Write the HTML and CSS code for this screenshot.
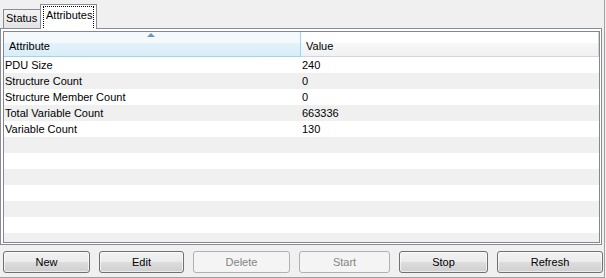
FILE: index.html
```html
<!DOCTYPE html>
<html>
<head>
<meta charset="utf-8">
<link rel="stylesheet" href="styles.css">
</head>
<body>
<div class="frame">
  <div class="tabs">
    <div class="tab">Status</div>
    <div class="tab active"><span class="focus">Attributes</span></div>
  </div>
  <div class="panel">
    <div class="grid">
      <div class="head">
        <div class="hcell sorted">Attribute<span class="arrow"></span></div>
        <div class="hcell">Value</div>
      </div>
      <div class="body">
        <div class="row"><div class="c1">PDU Size</div><div class="c2">240</div></div>
        <div class="row alt"><div class="c1">Structure Count</div><div class="c2">0</div></div>
        <div class="row"><div class="c1">Structure Member Count</div><div class="c2">0</div></div>
        <div class="row alt"><div class="c1">Total Variable Count</div><div class="c2">663336</div></div>
        <div class="row"><div class="c1">Variable Count</div><div class="c2">130</div></div>
        <div class="row alt"></div>
        <div class="row"></div>
        <div class="row alt"></div>
        <div class="row"></div>
        <div class="row alt"></div>
        <div class="row"></div>
        <div class="row alt"></div>
      </div>
    </div>
  </div>
  <div class="buttons">
    <button class="btn">New</button>
    <button class="btn">Edit</button>
    <button class="btn" disabled>Delete</button>
    <button class="btn" disabled>Start</button>
    <button class="btn">Stop</button>
    <button class="btn">Refresh</button>
  </div>
</div>
</body>
</html>
```
FILE: styles.css
```css
html, body {
  margin: 0;
  padding: 0;
  background: #f0f0f0;
}
body {
  font-family: "Liberation Sans", Arial, sans-serif;
  font-size: 11px;
  color: #000;
}
.frame {
  width: 604px;
  height: 277px;
  border-right: 1px solid #a0a0a0;
  border-bottom: 1px solid #a0a0a0;
  display: flex;
  flex-direction: column;
  overflow: hidden;
}
.tabs {
  height: 28px;
  display: flex;
  align-items: flex-end;
  padding-left: 3px;
}
.tab {
  box-sizing: border-box;
  height: 19px;
  width: 37px;
  border: 1px solid #898c95;
  border-bottom: none;
  border-right: none;
  background: linear-gradient(#f3f3f3, #e3e3e3);
  padding: 1px 0 0 2px;
  line-height: 14px;
}
.tab.active {
  height: 25px;
  width: 57px;
  background: #fff;
  border-right: 1px solid #898c95;
  padding: 1px 0 0 2px;
  margin-bottom: -1px;
  position: relative;
  z-index: 1;
}
.focus {
  display: block;
  border: 1px dotted #000;
  border-bottom: none;
  height: 22px;
  width: 51px;
  box-sizing: border-box;
  padding: 1px 0 0 2px;
  line-height: 14px;
}
.panel {
  box-sizing: border-box;
  width: 602px;
  height: 217px;
  border: 1px solid #898c95;
  background: #fff;
  padding: 2px 1px 1px 2px;
}
.grid {
  box-sizing: border-box;
  height: 212px;
  border: 1px solid #828790;
  display: flex;
  flex-direction: column;
  overflow: hidden;
}
.head {
  display: grid;
  grid-template-columns: 297px 1fr;
  height: 25px;
  flex: none;
}
.hcell {
  box-sizing: border-box;
  height: 25px;
  padding: 8px 0 0 5px;
  line-height: 13px;
  background: linear-gradient(#ffffff 0, #ffffff 44%, #f6f7f8 45%, #f0f1f3 100%);
  border-bottom: 1px solid #d5d5d5;
  border-right: 1px solid #d5d5d5;
  position: relative;
}
.hcell.sorted {
  background: linear-gradient(#f3f9fd 0, #f3f9fd 44%, #e3f2fa 45%, #d9edf8 100%);
  border-bottom: 1px solid #9dd4ee;
  border-right: 1px solid #96d9f9;
}
.arrow {
  position: absolute;
  left: 143px;
  top: 1px;
  width: 0;
  height: 0;
  border-left: 4px solid transparent;
  border-right: 4px solid transparent;
  border-bottom: 4px solid #6e96b0;
}
.body {
  flex: 1;
  overflow: hidden;
}
.row {
  display: grid;
  grid-template-columns: 298px 1fr;
  height: 16px;
  line-height: 16px;
  background: #fff;
}
.row.alt {
  background: #f0f0f0;
}
.c1 {
  padding-left: 1px;
  white-space: nowrap;
}
.c2 {
  padding-left: 0;
}
.buttons {
  display: grid;
  grid-template-columns: 87px 85px 97px 91px 89px 106px;
  column-gap: 9px;
  padding: 6px 0 0 3px;
}
.btn {
  box-sizing: border-box;
  height: 22px;
  font-family: "Liberation Sans", Arial, sans-serif;
  font-size: 11px;
  color: #000;
  border: 1px solid #707070;
  border-radius: 3px;
  background: linear-gradient(#f2f2f2 0, #ebebeb 50%, #dddddd 51%, #cfcfcf 100%);
  padding: 0;
  box-shadow: inset 0 0 0 1px rgba(255,255,255,0.6);
}
.btn:disabled {
  border-color: #adb2b5;
  background: #f4f4f4;
  color: #838383;
  box-shadow: none;
}
```
